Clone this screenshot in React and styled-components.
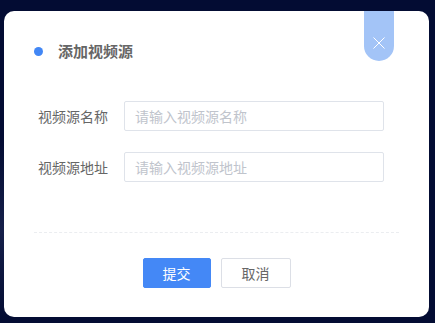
import styled, { createGlobalStyle } from 'styled-components'

const GlobalStyle = createGlobalStyle`
  html, body {
    margin: 0;
    padding: 0;
    background: #030c33;
  }
  body {
    font-family: "Noto Sans CJK SC", "Noto Sans", sans-serif;
  }
`

// styles
const Page = styled.div`
  width: 435px;
  height: 323px;
  box-sizing: border-box;
  padding: 11px 0 0 4px;
  background: radial-gradient(ellipse 60px 90px at 0px 230px, #16204a 0%, rgba(3, 12, 51, 0) 100%), #030c33;
  overflow: hidden;
`

const Modal = styled.div`
  position: relative;
  width: 425px;
  height: 306px;
  box-sizing: border-box;
  padding: 30px 30px 0 30px;
  background: #fff;
  border-radius: 10px;
`

const CloseTab = styled.button`
  position: absolute;
  top: 0;
  right: 35px;
  width: 30px;
  height: 50px;
  padding: 0;
  border: none;
  border-radius: 0 0 15px 15px;
  background: #a3c4f7;
  display: flex;
  align-items: flex-end;
  justify-content: center;
  padding-bottom: 12px;
  box-sizing: border-box;
  cursor: pointer;
`

const Header = styled.div`
  display: flex;
  align-items: center;
  gap: 15px;
  height: 20px;
`

const Dot = styled.span`
  width: 9px;
  height: 9px;
  border-radius: 50%;
  background: #4287f5;
`

const Title = styled.h3`
  margin: 0;
  font-size: 15px;
  line-height: 20px;
  font-weight: 700;
  color: #666;
`

const Form = styled.div`
  display: flex;
  flex-direction: column;
  gap: 21px;
  margin-top: 40px;
`

const Row = styled.div`
  display: flex;
  align-items: center;
`

const Label = styled.label`
  width: 90px;
  box-sizing: border-box;
  padding-right: 16px;
  text-align: right;
  font-size: 14px;
  line-height: 30px;
  color: #666;
`

const Input = styled.input`
  width: 260px;
  height: 30px;
  box-sizing: border-box;
  padding: 0 10px;
  border: 1px solid #dfe3ea;
  border-radius: 2px;
  font-family: inherit;
  font-size: 14px;
  color: #606266;
  outline: none;

  &::placeholder {
    color: #c0c4cc;
  }
`

const Divider = styled.div`
  margin-top: 50px;
  border-top: 1px dashed #ebedf0;
`

const Footer = styled.div`
  display: flex;
  justify-content: center;
  gap: 10px;
  margin-top: 25px;
`

const Button = styled.button`
  width: ${p => p.$w}px;
  height: 30px;
  border-radius: 2px;
  font-family: inherit;
  font-size: 14px;
  cursor: pointer;
  border: 1px solid ${p => (p.$primary ? '#4488f6' : '#dcdfe6')};
  background: ${p => (p.$primary ? '#4488f6' : '#fff')};
  color: ${p => (p.$primary ? '#fff' : '#666')};
`

const App = () => {
  return (
    <Page>
      <GlobalStyle />
      <Modal>
        <CloseTab aria-label='关闭'>
          <svg width='12' height='12' viewBox='0 0 12 12'>
            <path d='M0.5 0.5 L11.5 11.5 M11.5 0.5 L0.5 11.5' stroke='#fff' strokeWidth='1' fill='none' />
          </svg>
        </CloseTab>
        <Header>
          <Dot />
          <Title>添加视频源</Title>
        </Header>
        <Form>
          <Row>
            <Label>视频源名称</Label>
            <Input type='text' placeholder='请输入视频源名称' />
          </Row>
          <Row>
            <Label>视频源地址</Label>
            <Input type='text' placeholder='请输入视频源地址' />
          </Row>
        </Form>
        <Divider />
        <Footer>
          <Button $primary $w={68}>提交</Button>
          <Button $w={70}>取消</Button>
        </Footer>
      </Modal>
    </Page>
  )
}

export default App
